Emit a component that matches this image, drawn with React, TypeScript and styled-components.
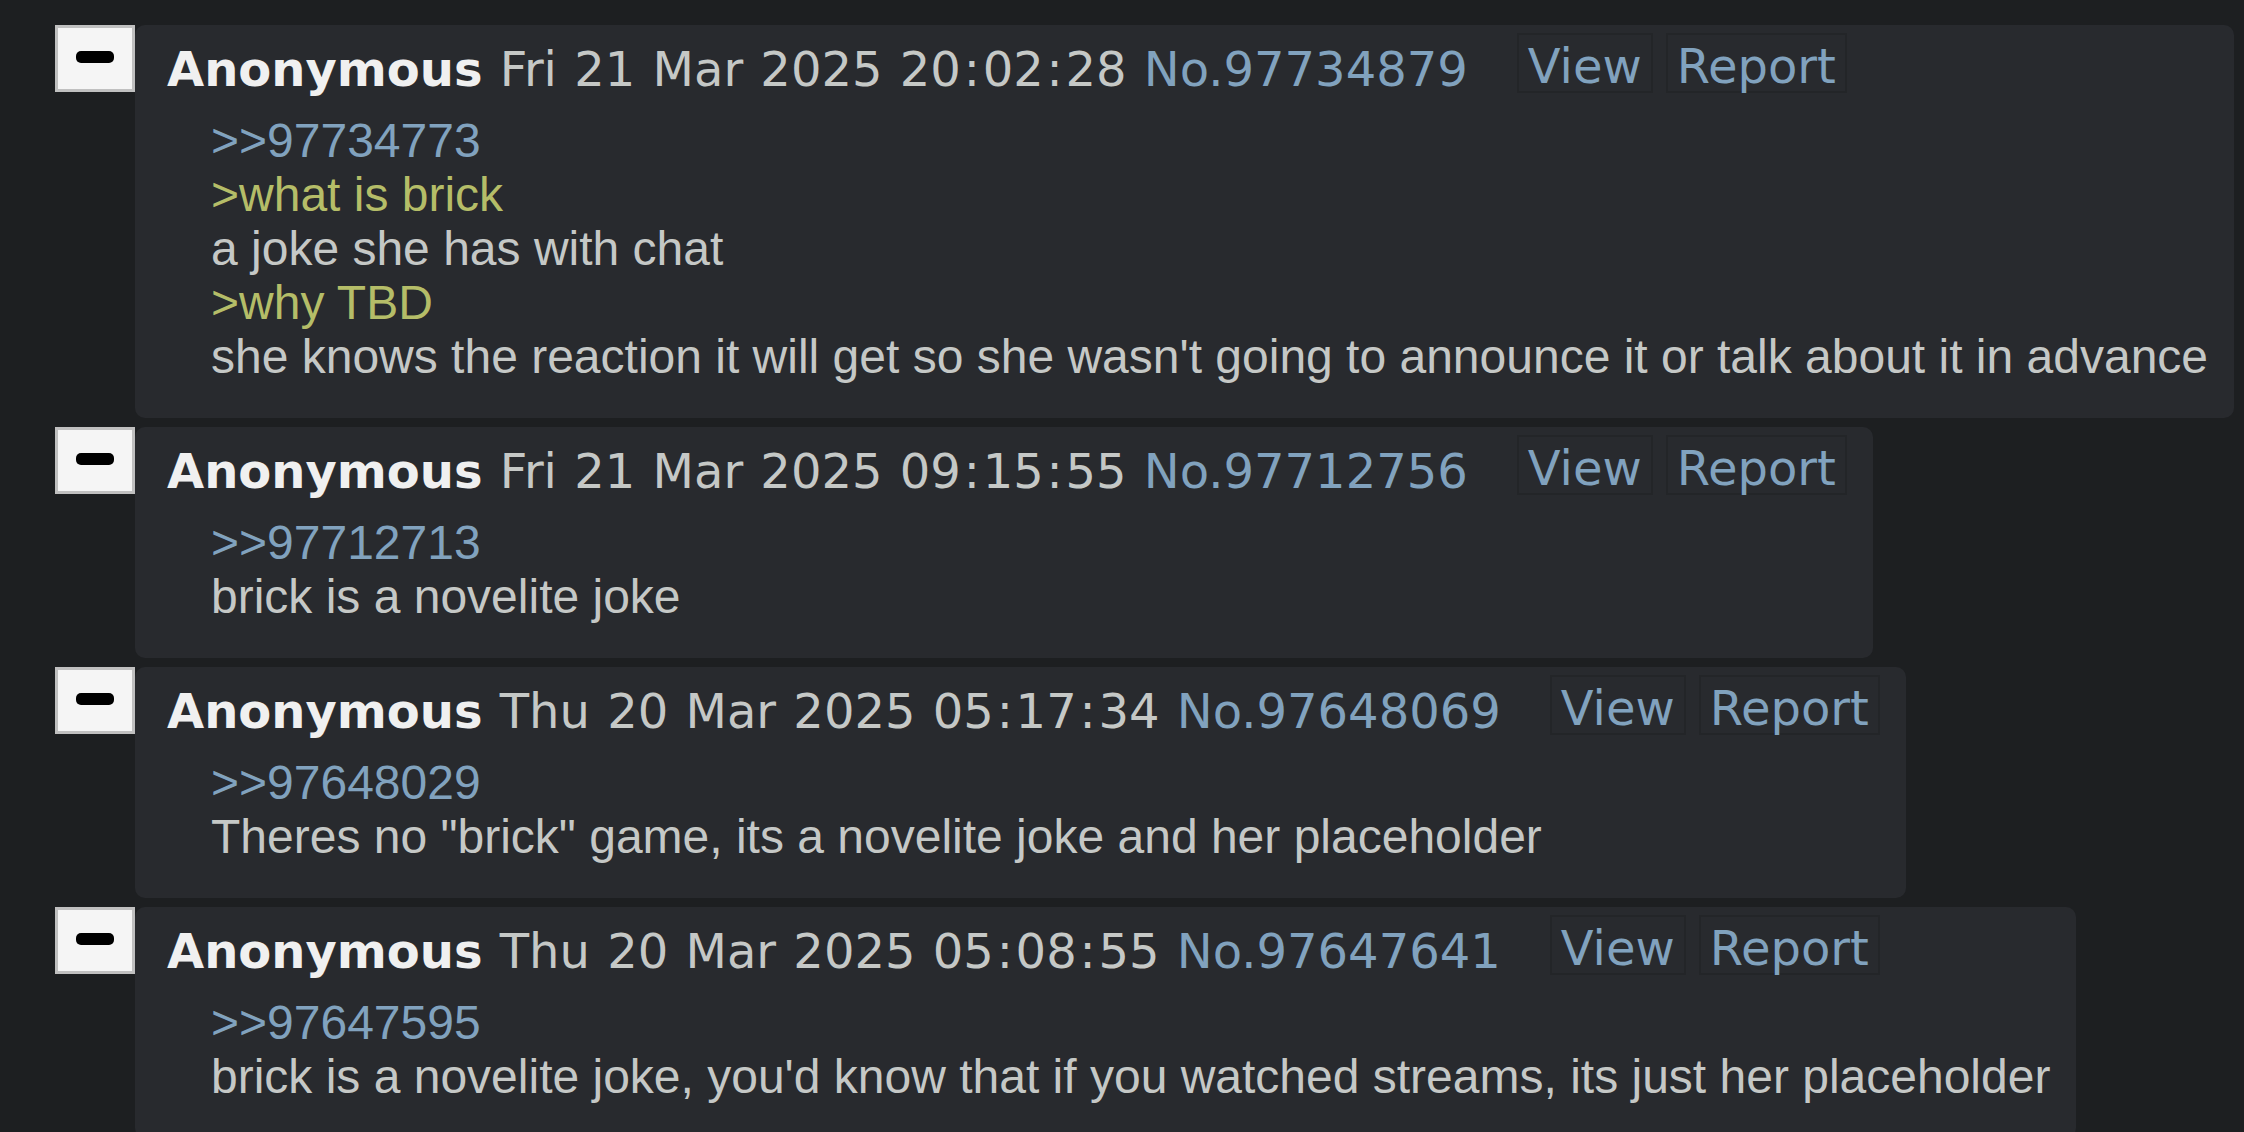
import React from "react";
import styled, { createGlobalStyle } from "styled-components";

const GlobalStyle = createGlobalStyle`
  html, body {
    margin: 0;
    padding: 0;
    background: #1d1f21;
  }
  body {
    padding: 25px 0 0 55px;
    font-family: "Liberation Sans", Arial, sans-serif;
  }
`;

const Thread = styled.div`
  display: flex;
  flex-direction: column;
  gap: 9px;
`;

const PostRow = styled.div`
  display: flex;
  align-items: flex-start;
`;

const Toggle = styled.button`
  flex: none;
  box-sizing: border-box;
  width: 80px;
  height: 67px;
  padding: 0;
  margin: 0;
  background: #f5f5f5;
  border: 3px solid #c0c0c0;
  display: flex;
  align-items: center;
  justify-content: center;
  cursor: pointer;
`;

const Minus = styled.span`
  display: block;
  width: 38px;
  height: 12px;
  border-radius: 5px;
  background: #000;
  margin-top: -3px;
`;

const Card = styled.div`
  flex: none;
  background: #282a2e;
  border-radius: 10px;
  padding: 8px 26px 34px 32px;
`;

const Header = styled.div`
  display: flex;
  align-items: flex-start;
  font-family: "DejaVu Sans", Verdana, sans-serif;
  font-size: 48px;
  line-height: 56px;
  white-space: nowrap;
`;

const Info = styled.div`
  padding-top: 8px;
  color: #c5c8c6;
  word-spacing: 2px;
`;

const Colon = styled.span`
  margin: 0 2.8px;
`;

const Name = styled.span`
  font-weight: bold;
  color: #f0f0f0;
`;

const PostNo = styled.span`
  color: #81a2be;
`;

const Actions = styled.div`
  display: flex;
  gap: 13px;
  margin-left: 49px;
`;

const ActionButton = styled.span`
  box-sizing: border-box;
  height: 60px;
  padding: 3px 9px 0;
  border: 2px solid #232528;
  color: #81a2be;
`;

const Body = styled.div`
  margin: 17px 0 0 44px;
  font-family: "Liberation Sans", Arial, sans-serif;
  font-size: 48px;
  line-height: 54px;
  color: #c5c8c6;
  white-space: nowrap;
`;

const Line = styled.div<{ $kind?: "quote" | "green" | "text" }>`
  color: ${(p) =>
    p.$kind === "quote" ? "#81a2be" : p.$kind === "green" ? "#b5bd68" : "#c5c8c6"};
`;

type PostData = {
  date: string;
  no: string;
  lines: { kind: "quote" | "green" | "text"; text: string }[];
};

const posts: PostData[] = [
  {
    date: "Fri 21 Mar 2025 20:02:28",
    no: "97734879",
    lines: [
      { kind: "quote", text: ">>97734773" },
      { kind: "green", text: ">what is brick" },
      { kind: "text", text: "a joke she has with chat" },
      { kind: "green", text: ">why TBD" },
      {
        kind: "text",
        text: "she knows the reaction it will get so she wasn't going to announce it or talk about it in advance",
      },
    ],
  },
  {
    date: "Fri 21 Mar 2025 09:15:55",
    no: "97712756",
    lines: [
      { kind: "quote", text: ">>97712713" },
      { kind: "text", text: "brick is a novelite joke" },
    ],
  },
  {
    date: "Thu 20 Mar 2025 05:17:34",
    no: "97648069",
    lines: [
      { kind: "quote", text: ">>97648029" },
      { kind: "text", text: 'Theres no "brick" game, its a novelite joke and her placeholder' },
    ],
  },
  {
    date: "Thu 20 Mar 2025 05:08:55",
    no: "97647641",
    lines: [
      { kind: "quote", text: ">>97647595" },
      {
        kind: "text",
        text: "brick is a novelite joke, you'd know that if you watched streams, its just her placeholder",
      },
    ],
  },
];

function DateText({ value }: { value: string }) {
  const parts = value.split(":");
  return (
    <>
      {parts.map((p, i) => (
        <React.Fragment key={i}>
          {i > 0 && <Colon>:</Colon>}
          {p}
        </React.Fragment>
      ))}
    </>
  );
}

function Post({ post }: { post: PostData }) {
  return (
    <PostRow>
      <Toggle aria-label="Hide post">
        <Minus />
      </Toggle>
      <Card>
        <Header>
          <Info>
            <Name>Anonymous</Name> <DateText value={post.date} /> <PostNo>No.{post.no}</PostNo>
          </Info>
          <Actions>
            <ActionButton>View</ActionButton>
            <ActionButton>Report</ActionButton>
          </Actions>
        </Header>
        <Body>
          {post.lines.map((l, i) => (
            <Line key={i} $kind={l.kind}>
              {l.text}
            </Line>
          ))}
        </Body>
      </Card>
    </PostRow>
  );
}

export default function App() {
  return (
    <>
      <GlobalStyle />
      <Thread>
        {posts.map((p) => (
          <Post key={p.no} post={p} />
        ))}
      </Thread>
    </>
  );
}
